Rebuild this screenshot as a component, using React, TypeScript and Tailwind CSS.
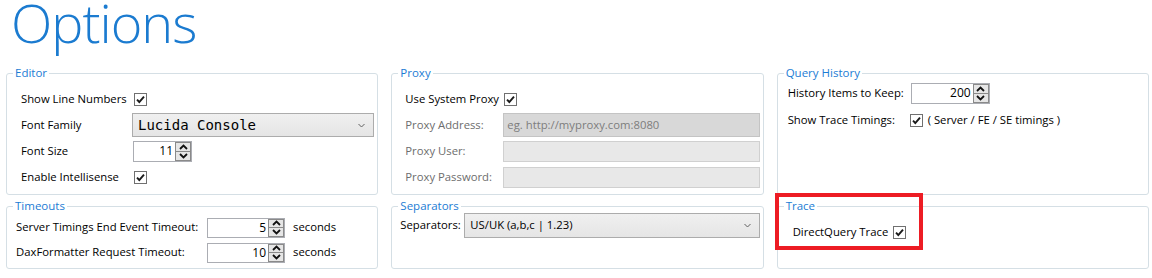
import type { ReactNode } from "react";

function CheckBox() {
  return (
    <span className="flex h-[13px] w-[13px] shrink-0 items-center justify-center border border-[#707070] bg-white">
      <svg width="11" height="11" viewBox="0 0 11 11">
        <path d="M2 5.6 L4.3 8 L9 2.6" fill="none" stroke="#1a1a1a" strokeWidth="1.9" />
      </svg>
    </span>
  );
}

function Arrow({ up }: { up?: boolean }) {
  return (
    <svg width="9" height="6" viewBox="0 0 9 6">
      <path
        d={up ? "M1 5 L4.5 1.5 L8 5" : "M1 1 L4.5 4.5 L8 1"}
        fill="none"
        stroke="#111"
        strokeWidth="1.8"
      />
    </svg>
  );
}

function NumberBox({ value, width, height = 21 }: { value: string; width: number; height?: number }) {
  return (
    <div
      className="flex shrink-0 border border-[#abadb3] bg-white"
      style={{ width, height }}
    >
      <div className="flex flex-1 items-center justify-end pr-[2px] text-[12px]">{value}</div>
      <div className="flex w-[16px] flex-col">
        <span className="flex flex-1 items-center justify-center border border-[#8a8a8a] bg-[#e6e6e6]">
          <Arrow up />
        </span>
        <span className="flex flex-1 items-center justify-center border border-t-0 border-[#8a8a8a] bg-[#e6e6e6]">
          <Arrow />
        </span>
      </div>
    </div>
  );
}

function ComboBox({ children, height = 24 }: { children: ReactNode; height?: number }) {
  return (
    <div
      className="flex flex-1 items-center justify-between border border-[#acacac] bg-gradient-to-b from-[#f0f0f0] to-[#e5e5e5] pl-[5px] pr-[8px]"
      style={{ height }}
    >
      {children}
      <svg width="7" height="5" viewBox="0 0 7 5">
        <path d="M0.5 1 L3.5 4 L6.5 1" fill="none" stroke="#606060" strokeWidth="1" />
      </svg>
    </div>
  );
}

function Group({ title, children }: { title: string; children?: ReactNode }) {
  return (
    <fieldset className="h-full min-w-0 rounded-[3px] border border-[#d5dfe5]">
      <legend className="ml-[6px] px-[2px] text-[11.5px] leading-[14px] text-[#1c7cd4]">{title}</legend>
      {children}
    </fieldset>
  );
}

function Row({ children, h = 26 }: { children: ReactNode; h?: number }) {
  return (
    <div className="flex items-center whitespace-nowrap" style={{ height: h }}>
      {children}
    </div>
  );
}

export default function App() {
  return (
    <div className="h-[278px] w-[1152px] overflow-hidden bg-white font-['Open_Sans',sans-serif] text-[11.3px] text-black">
      <div className="h-[66px] pl-[11px]">
        <h1 className="text-[54px] font-light leading-[44px] tracking-[-1px] text-[#1b7bd0]">Options</h1>
      </div>

      <div className="grid grid-cols-3 grid-rows-[129px_70px_40px] gap-x-[13px] gap-y-[4px] pl-[6px] pr-[3px]">
        <Group title="Editor">
          <div className="pl-[14px] pr-[3px] pt-[6px]">
            <Row>
              <span className="w-[113px] shrink-0">Show Line Numbers</span>
              <CheckBox />
            </Row>
            <Row>
              <span className="w-[111px] shrink-0">Font Family</span>
              <ComboBox>
                <span className="font-['DejaVu_Sans_Mono',monospace] text-[14px]">Lucida Console</span>
              </ComboBox>
            </Row>
            <Row>
              <span className="w-[112px] shrink-0">Font Size</span>
              <NumberBox value="11" width={59} />
            </Row>
            <Row>
              <span className="w-[113px] shrink-0">Enable Intellisense</span>
              <CheckBox />
            </Row>
          </div>
        </Group>

        <Group title="Proxy">
          <div className="pl-[13px] pr-[3px] pt-[6px]">
            <Row>
              <span className="w-[99px] shrink-0">Use System Proxy</span>
              <CheckBox />
            </Row>
            <Row>
              <span className="w-[98px] shrink-0 text-[#6d6d6d]">Proxy Address:</span>
              <div className="flex h-[24px] flex-1 items-center border border-[#c4c4c4] bg-[#d8d8d8] pl-[3px] text-[#7d7d7d]">
                eg. http://myproxy.com:8080
              </div>
            </Row>
            <Row>
              <span className="w-[98px] shrink-0 text-[#6d6d6d]">Proxy User:</span>
              <div className="h-[21px] flex-1 border border-[#d0d0d0] bg-[#e8e8e8]" />
            </Row>
            <Row>
              <span className="w-[98px] shrink-0 text-[#6d6d6d]">Proxy Password:</span>
              <div className="h-[21px] flex-1 border border-[#d0d0d0] bg-[#e8e8e8]" />
            </Row>
          </div>
        </Group>

        <Group title="Query History">
          <div className="pl-[10px] pr-[3px]">
            <Row>
              <span className="w-[123px] shrink-0">History Items to Keep:</span>
              <NumberBox value="200" width={79} />
            </Row>
            <div className="mt-[1px]">
              <Row>
                <span className="w-[122px] shrink-0">Show Trace Timings:</span>
                <CheckBox />
                <span className="ml-[5px]">( Server / FE / SE timings )</span>
              </Row>
            </div>
          </div>
        </Group>

        <Group title="Timeouts">
          <div className="pl-[9px] pt-[2px]">
            <Row h={25}>
              <span className="w-[191px] shrink-0">Server Timings End Event Timeout:</span>
              <NumberBox value="5" width={78} height={20} />
              <span className="ml-[8px]">seconds</span>
            </Row>
            <Row h={25}>
              <span className="w-[191px] shrink-0">DaxFormatter Request Timeout:</span>
              <NumberBox value="10" width={78} height={20} />
              <span className="ml-[8px]">seconds</span>
            </Row>
          </div>
        </Group>

        <Group title="Separators">
          <div className="pl-[8px] pr-[3px]">
            <Row h={25}>
              <span className="w-[64px] shrink-0">Separators:</span>
              <ComboBox height={25}>
                <span>US/UK (a,b,c | 1.23)</span>
              </ComboBox>
            </Row>
          </div>
        </Group>

        <div className="relative">
          <Group title="Trace">
            <div className="pl-[15px] pt-[6px]">
              <Row>
                <span className="w-[100px] shrink-0">DirectQuery Trace</span>
                <CheckBox />
              </Row>
            </div>
          </Group>
          <div className="absolute -left-[2px] -top-[6px] h-[57px] w-[148px] border-4 border-[#ed1c24]" />
        </div>

        <div className="pt-[3px]">
          <Group title="Version Notification" />
        </div>
      </div>
    </div>
  );
}
